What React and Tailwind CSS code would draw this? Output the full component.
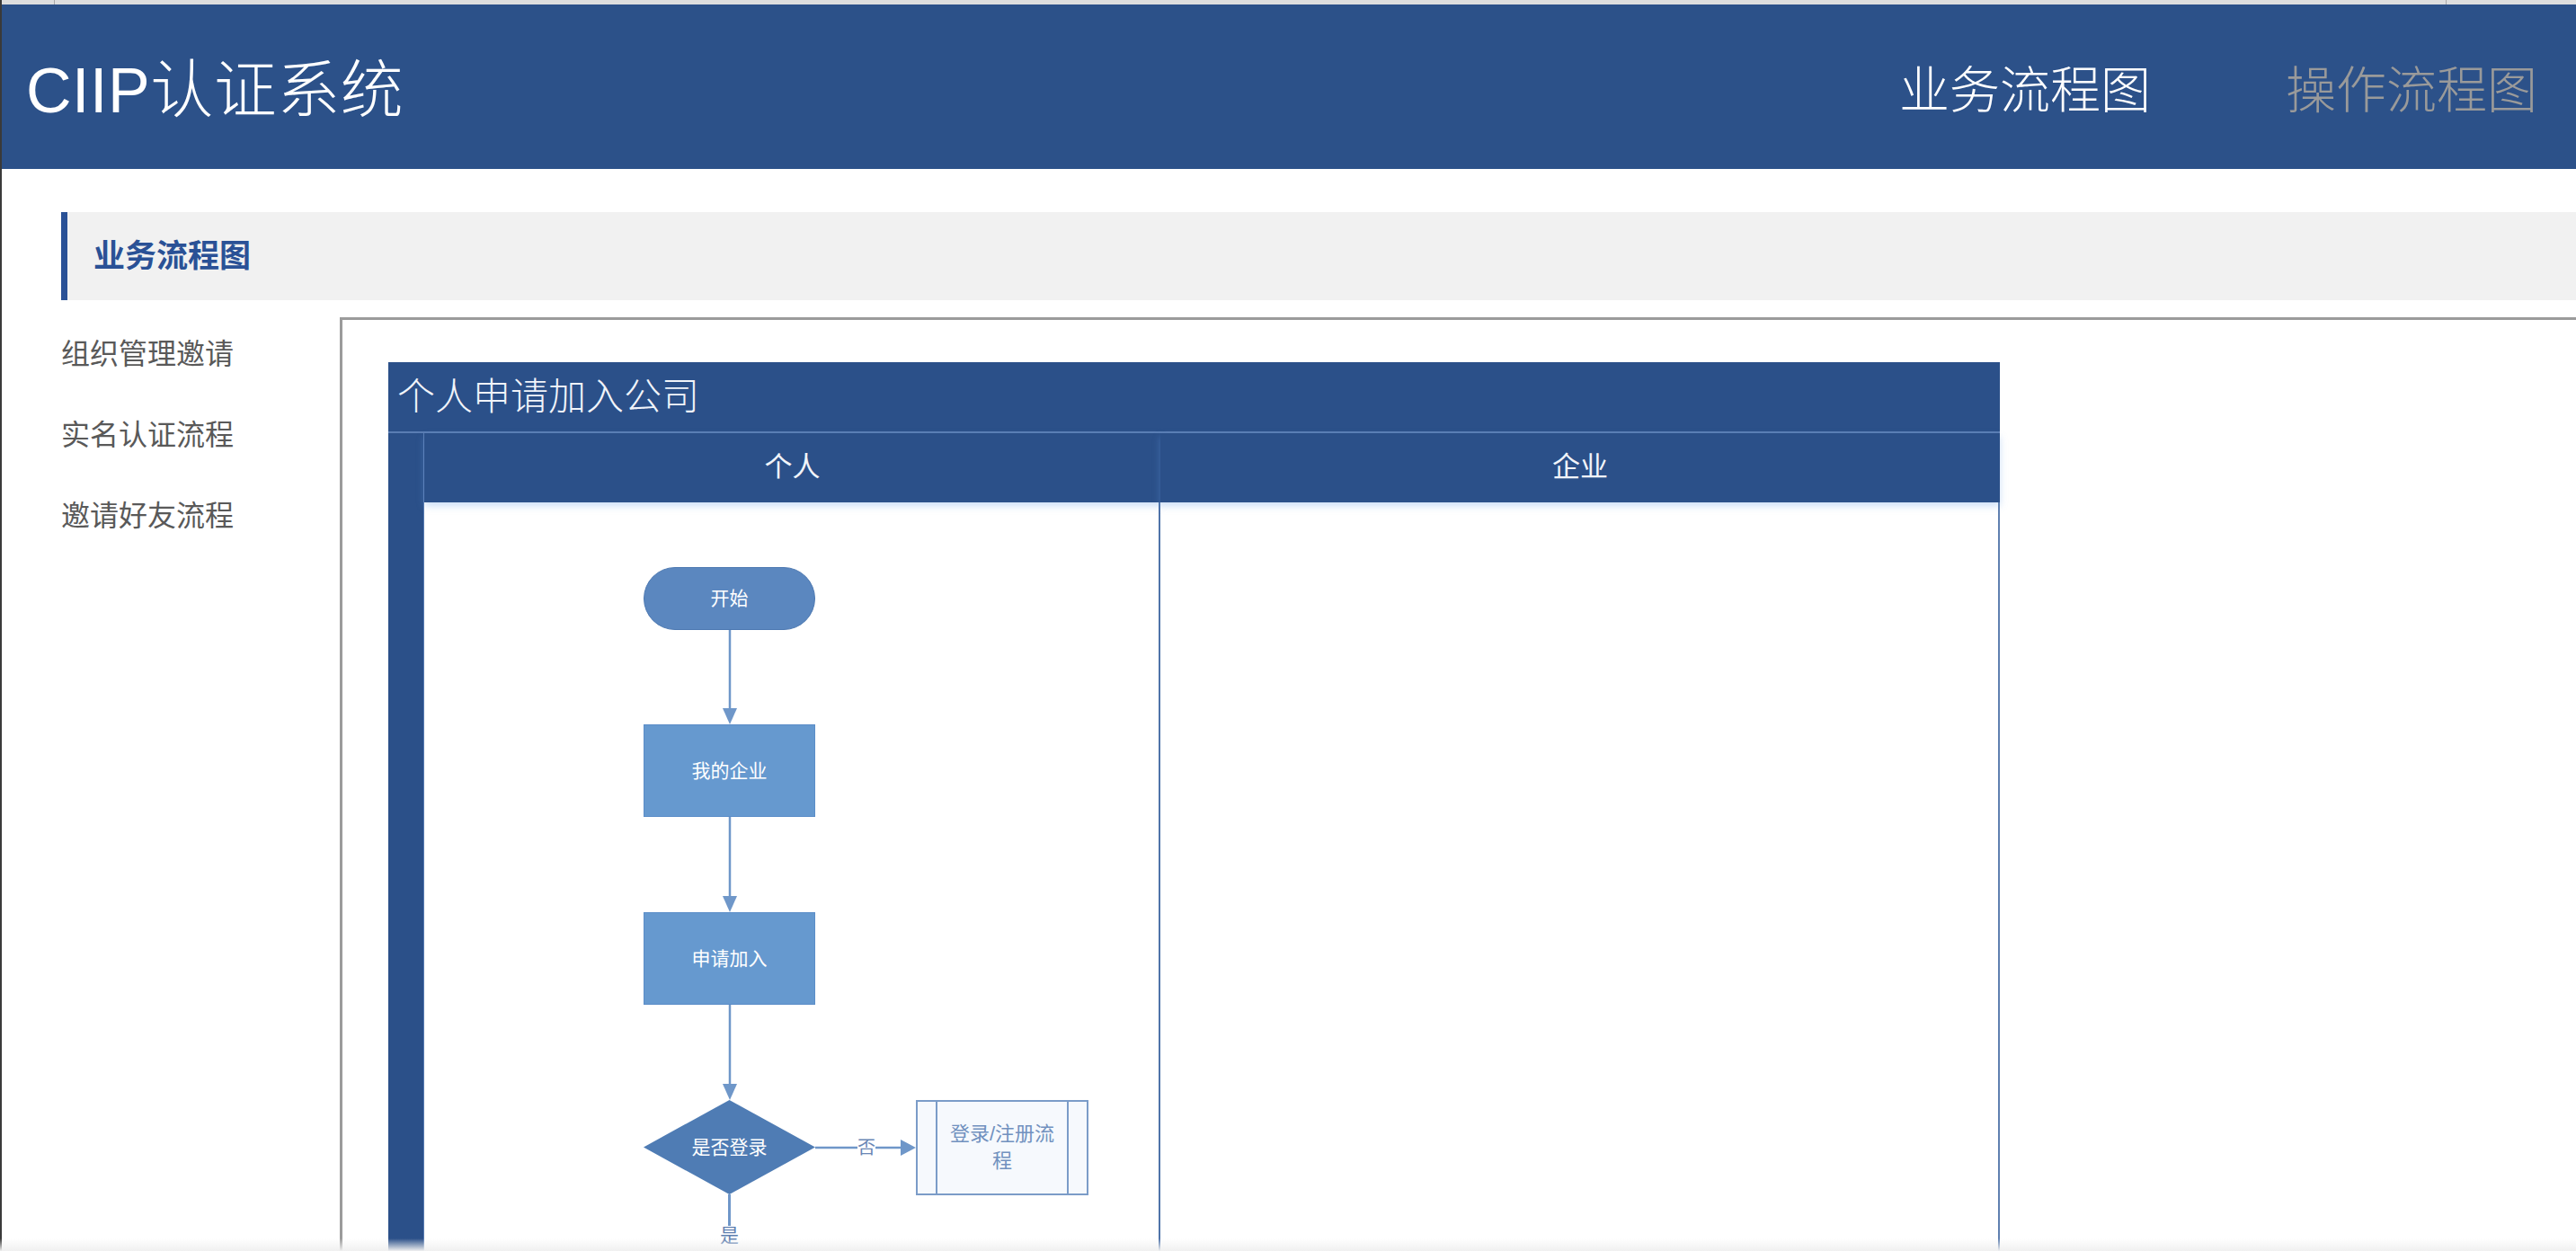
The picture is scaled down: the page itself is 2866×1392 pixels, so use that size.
import React from "react";

const cjk = { fontFamily: '"Liberation Sans", "Noto Sans CJK SC", sans-serif' };

function ArrowDown({ h }) {
  return (
    <div className="w-[191px] flex justify-center shrink-0" style={{ height: h }}>
      <svg width="20" height={h} viewBox={`0 0 20 ${h}`}>
        <line x1="10" y1="0" x2="10" y2={h - 16} stroke="#6f97c9" strokeWidth="2.5" />
        <polygon points={`2,${h - 18} 18,${h - 18} 10,${h}`} fill="#6f97c9" />
      </svg>
    </div>
  );
}

function Flowchart() {
  return (
    <div className="w-[1793px] flex flex-col">
      <div className="h-[77px] shrink-0 bg-[#2b5089] flex items-center pl-[10px] text-[42px] text-[#f1f4fa] font-light leading-none">
        个人申请加入公司
      </div>
      <div className="grid grid-cols-[40px_819px_934px] border-t-2 border-[#5a7db3]">
        <div className="bg-[#2b5089] border-r border-[#5a7db3] h-[920px]" />
        <div className="flex flex-col">
          <div className="h-[77px] shrink-0 bg-[#2b5089] flex items-center justify-center text-[31px] text-[#f1f4fa] shadow-[0_4px_8px_rgba(110,160,230,0.35)]">
            个人
          </div>
          <div className="flex-1 border-r-2 border-[#4f73a9] pt-[72px] pl-[244px] flex flex-col items-start">
            <div className="w-[191px] h-[70px] shrink-0 rounded-full bg-[#5b87bf] border border-[#4c78b1] flex items-center justify-center text-[21px] text-white">
              开始
            </div>
            <ArrowDown h={105} />
            <div className="w-[191px] h-[103px] shrink-0 bg-[#6699cf] border border-[#5b8dc8] flex items-center justify-center text-[21px] text-white">
              我的企业
            </div>
            <ArrowDown h={106} />
            <div className="w-[191px] h-[103px] shrink-0 bg-[#6699cf] border border-[#5b8dc8] flex items-center justify-center text-[21px] text-white">
              申请加入
            </div>
            <ArrowDown h={106} />
            <div className="flex items-center h-[105px] shrink-0">
              <div className="relative w-[191px] h-[105px] flex items-center justify-center">
                <svg className="absolute inset-0" width="191" height="105" viewBox="0 0 191 105">
                  <polygon points="0,52.5 95.5,0 191,52.5 95.5,105" fill="#4f7cb4" />
                </svg>
                <span className="relative text-[21px] text-white">是否登录</span>
              </div>
              <div className="relative w-[112px] h-[30px] flex items-center">
                <svg className="absolute inset-0" width="112" height="30" viewBox="0 0 112 30">
                  <line x1="0" y1="15" x2="96" y2="15" stroke="#6f97c9" strokeWidth="2.5" />
                  <polygon points="95,6 112,15 95,24" fill="#6f97c9" />
                </svg>
                <span className="relative ml-[47px] bg-white text-[20px] leading-none text-[#6a87b5]">否</span>
              </div>
              <div className="w-[192px] h-[106px] border-2 border-[#7b9cc8] bg-[#f6f9fd] flex">
                <div className="w-[22px] border-r-2 border-[#7b9cc8]" />
                <div className="flex-1 flex items-center justify-center text-center text-[22px] leading-[30px] text-[#7191bf]">
                  登录/注册流
                  <br />
                  程
                </div>
                <div className="w-[22px] border-l-2 border-[#7b9cc8]" />
              </div>
            </div>
            <div className="w-[191px] flex flex-col items-center shrink-0">
              <div className="w-[2.5px] h-[35px] bg-[#6f97c9]" />
              <span className="text-[21px] leading-none text-[#5f7fb0]">是</span>
            </div>
          </div>
        </div>
        <div className="flex flex-col">
          <div className="h-[77px] shrink-0 bg-[#2b5089] flex items-center justify-center text-[31px] text-[#f1f4fa] shadow-[0_4px_8px_rgba(110,160,230,0.35)]">
            企业
          </div>
          <div className="flex-1 border-r-2 border-[#5f80b0]" />
        </div>
      </div>
    </div>
  );
}

export default function App() {
  return (
    <div className="relative w-full h-[1392px] overflow-hidden flex bg-white" style={cjk}>
      <div className="w-[2px] shrink-0 bg-[#3a3a3a]" />
      <div className="flex-1 flex flex-col">
        <div className="h-[5px] shrink-0 bg-[#dedede] flex">
          <div className="w-[58px]" />
          <div className="w-px bg-[#a9a9a9]" />
          <div className="flex-1" />
          <div className="w-px bg-[#a9a9a9]" />
          <div className="w-[144px]" />
        </div>
        <header className="h-[183px] shrink-0 bg-[#2c5189] flex items-center justify-between pl-[27px] pr-[43px] pt-[8px]">
          <div className="text-[70px] font-light leading-none text-white tracking-[0.5px]">CIIP认证系统</div>
          <nav className="flex gap-[150px] text-[56px] font-light leading-none">
            <span className="text-white">业务流程图</span>
            <span className="text-[#9a9a9a]">操作流程图</span>
          </nav>
        </header>
        <div className="mt-[48px] ml-[66px] h-[98px] shrink-0 bg-[#f1f1f1] border-l-[7px] border-[#2a5196] flex items-center pl-[29px]">
          <span className="text-[35px] font-bold text-[#2a5196]">业务流程图</span>
        </div>
        <div className="flex flex-1 min-h-0">
          <ul className="ml-[66px] w-[310px] shrink-0 pt-[15px] flex flex-col text-[32px] text-[#595959]">
            <li className="h-[90px] leading-[90px]">组织管理邀请</li>
            <li className="h-[90px] leading-[90px]">实名认证流程</li>
            <li className="h-[90px] leading-[90px]">邀请好友流程</li>
          </ul>
          <div className="flex-1 mt-[19px] border-t-[3px] border-l-[3px] border-[#9b9b9b] pl-[51px] pt-[47px] overflow-hidden">
            <Flowchart />
          </div>
        </div>
      </div>
      <div className="absolute left-0 right-0 bottom-0 h-[14px] bg-gradient-to-b from-transparent to-[#f0f0f0] pointer-events-none" />
    </div>
  );
}
